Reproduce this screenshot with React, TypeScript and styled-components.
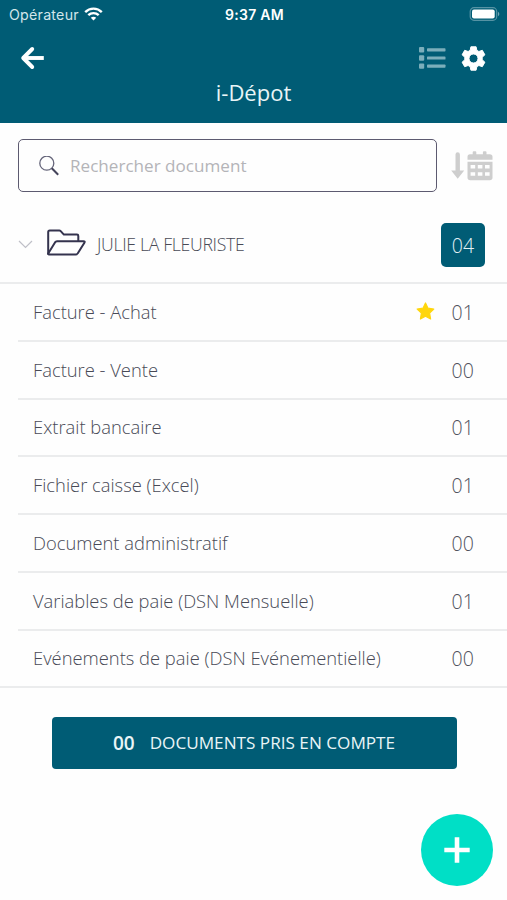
import React from 'react';
import styled, { createGlobalStyle } from 'styled-components';

const TEAL = '#005c75';

const GlobalStyle = createGlobalStyle`
  *, *::before, *::after { box-sizing: border-box; }
  body { margin: 0; background: #fff; font-family: "Open Sans", sans-serif; }
  button { font: inherit; border: 0; padding: 0; background: none; }
  svg { display: block; flex: none; }
`;

const Screen = styled.main`
  position: relative;
  width: 507px;
  height: 900px;
  display: flex;
  flex-direction: column;
  overflow: hidden;
  background: #fefefe;
`;

const Header = styled.header`
  height: 123px;
  flex: none;
  background: ${TEAL};
  color: #fff;
`;

const StatusBar = styled.div`
  height: 28px;
  display: grid;
  grid-template-columns: 1fr auto 1fr;
  align-items: center;
  padding: 0 7px 0 9px;
  font-family: Inter, sans-serif;
  font-size: 14.2px;
`;

const Carrier = styled.div`
  display: flex;
  align-items: center;
  gap: 5px;
  color: #d3e6ea;
  letter-spacing: 0.25px;
`;

const Clock = styled.div`
  font-weight: 600;
  font-size: 14px;
  letter-spacing: 0.3px;
`;

const BatterySlot = styled.div`
  justify-self: end;
  margin-top: -1px;
`;

const Toolbar = styled.nav`
  height: 60px;
  display: flex;
  align-items: center;
  padding: 0 21px 0 19px;
`;

const ToolbarActions = styled.div`
  display: flex;
  align-items: center;
  gap: 15px;
  margin-left: auto;
`;

const IconButton = styled.button`
  display: flex;
  color: inherit;
`;

const Title = styled.h1`
  margin: -11px 0 0;
  text-align: center;
  font-size: 22px;
  line-height: 30px;
  font-weight: 400;
  color: #e9f5f7;
`;

const SearchRow = styled.div`
  height: 85px;
  display: flex;
  align-items: center;
  gap: 14px;
  padding: 0 14px 0 18px;
`;

const SearchField = styled.label`
  width: 419px;
  height: 53px;
  display: flex;
  align-items: center;
  gap: 11px;
  padding-left: 20px;
  border: 1.5px solid #5d5a70;
  border-radius: 5px;
`;

const SearchInput = styled.input`
  flex: 1;
  min-width: 0;
  border: 0;
  outline: 0;
  padding: 0 0 1px;
  background: none;
  font: 400 17.1px "Open Sans", sans-serif;
  color: #6d6e78;
  &::placeholder { color: #b4b4b8; opacity: 1; }
`;

const FolderRow = styled.section`
  height: 76px;
  display: flex;
  align-items: center;
  padding: 0 22px 0 18px;
  border-bottom: 2px solid #ebeced;
`;

const FolderName = styled.h2`
  margin: -2px auto 0 11px;
  font-size: 17.7px;
  font-weight: 300;
  letter-spacing: -0.33px;
  color: #484a56;
`;

const Badge = styled.span`
  width: 44px;
  height: 44px;
  display: grid;
  place-items: center;
  border-radius: 5px;
  background: ${TEAL};
  color: #e4f2f5;
  font-size: 19.5px;
  font-weight: 300;
`;

const List = styled.ul`
  margin: 0;
  padding: 0;
  list-style: none;
  border-bottom: 2px solid #ebeced;
`;

const Item = styled.li`
  height: 57.75px;
  margin-left: 18px;
  padding: 0 29.5px 0 15px;
  display: flex;
  align-items: center;
  border-bottom: 2px solid #ebeced;
  &:last-child { border-bottom: 0; height: 55.5px; }
`;

const ItemLabel = styled.span`
  margin: -1px auto 0 0;
  font-size: 18.35px;
  font-weight: 300;
  color: #484a56;
`;

const Count = styled.span`
  width: 26px;
  margin: 1px 0 0 17px;
  font-size: 19.5px;
  font-weight: 300;
  color: #50525c;
`;

const SummaryButton = styled.button`
  width: 405px;
  height: 52px;
  margin: 29px 0 0 51.5px;
  flex: none;
  display: flex;
  align-items: center;
  justify-content: center;
  gap: 15px;
  padding-bottom: 1px;
  border-radius: 4px;
  background: ${TEAL};
  color: #e9f5f7;
  font-size: 17.15px;
`;

const SummaryCount = styled.span`
  font-size: 19px;
  font-weight: 600;
`;

const AddButton = styled.button`
  position: absolute;
  right: 14px;
  bottom: 14px;
  width: 72px;
  height: 72px;
  display: grid;
  place-items: center;
  border-radius: 50%;
  background: #00dfc6;
`;

const WifiIcon = () => (
  <svg width="19" height="14" viewBox="0 0 19 14" fill="none" stroke="#fff" strokeWidth="2.4">
    <path d="M1.2 5.1C5.8.5 13.2.5 17.8 5.1" />
    <path d="M4.3 8.2c2.9-2.8 7.5-2.8 10.4 0" />
    <path d="M9.5 13.5 6.8 10.8c1.5-1.4 3.900-1.400 5.400 0z" fill="#fff" stroke="none" />
  </svg>
);

const BatteryIcon = () => (
  <svg width="31" height="14" viewBox="0 0 31 14">
    <rect x="1.200" y=".7" width="26.500" height="12.600" rx="3.800" fill="none" stroke="#5693a4" strokeWidth="1.200" />
    <rect x="3" y="2.600" width="22.700" height="8.800" rx="2" fill="#fff" />
    <path d="M29 4.800c1.800.8 1.800 3.600 0 4.400z" fill="#73a5b3" />
  </svg>
);

const BackIcon = () => (
  <svg width="26" height="24" viewBox="0 0 26 24" fill="none" stroke="#fff" strokeWidth="3.900" strokeLinejoin="round" strokeLinecap="round">
    <path d="M13.200 3 4.200 12l9 9" />
    <path d="M5 12H24.800" strokeLinecap="butt" />
  </svg>
);

const ListIcon = () => (
  <svg width="27" height="22" viewBox="0 0 27 22" fill="#7baebb">
    <rect x="0" y="0" width="5.2" height="5.4" rx="1" />
    <rect x="0" y="8.3" width="5.2" height="5.4" rx="1" />
    <rect x="0" y="16.4" width="5.2" height="5.4" rx="1" />
    <rect x="8" y="1.2" width="18.5" height="3.2" rx=".7" />
    <rect x="8" y="9.4" width="18.5" height="3.2" rx=".7" />
    <rect x="8" y="17.5" width="18.5" height="3.2" rx=".7" />
  </svg>
);

const GearIcon = () => (
  <svg width="25" height="25" viewBox="0 0 25 25">
    <path
      fillRule="evenodd"
      fill="#fff"
      stroke="#fff"
      strokeWidth="1"
      strokeLinejoin="round"
      d="M9.900.8h5.200l.7 3.500 2.100 1.200 3.400-1.200 2.600 4.500-2.700 2.400v2.600l2.700 2.400-2.600 4.500-3.400-1.200-2.100 1.200-.7 3.500H9.900l-.7-3.500-2.100-1.200-3.400 1.200-2.600-4.500 2.700-2.400v-2.600L1.100 8.800l2.600-4.500 3.400 1.200 2.100-1.200zM12.500 8a4.500 4.500 0 1 0 0 9 4.500 4.500 0 1 0 0-9z"
    />
  </svg>
);

const SearchIcon = () => (
  <svg width="20" height="20" viewBox="0 0 20 20" fill="none">
    <circle cx="7.8" cy="7.200" r="7" stroke="#65657a" strokeWidth="1.3" />
    <path d="m12.800 12.200 6.400 6.500" stroke="#45445b" strokeWidth="2" />
  </svg>
);

const SortByDateIcon = () => (
  <svg width="42" height="30" viewBox="0 0 42 30" fill="#cecece">
    <path d="M4.500 3.500a2.200 2.200 0 0 1 4.400 0V19.500h4.300L6.700 27.800.2 19.500h4.300z" />
    <path fillRule="evenodd" d="M16.500 8.800V5.700q0-2.500 2.500-2.500h2.700V1.300q0-1 1-1h1.600q1 0 1 1v1.900h6.600V1.300q0-1 1-1h1.600q1 0 1 1v1.900h3.300q2.700 0 2.700 2.500v3.100zM16.500 10.700h25v15.800q0 2.700-2.700 2.700H19.200q-2.700 0-2.700-2.700zM19.600 14v3.400h4.600V14zM26.800 14v3.400h4.600V14zM34 14v3.400h4.600V14zM19.600 21.200v3.600h4.600v-3.600zM26.800 21.200v3.600h4.600v-3.600zM34 21.200v3.600h4.600v-3.600z" />
  </svg>
);

const ChevronGlyph = styled.svg`
  margin-top: -2px;
`;

const ChevronIcon = () => (
  <ChevronGlyph width="15" height="9" viewBox="0 0 15 9" fill="none" stroke="#bfc0c8" strokeWidth="1.2">
    <path d="m1 1 6.500 6.500L14 1" />
  </ChevronGlyph>
);

const FolderGlyph = styled.svg`
  margin: -6px 0 0 13px;
`;

const FolderIcon = () => (
  <FolderGlyph width="40" height="27" viewBox="0 0 40 27" fill="none" stroke="#34334e" strokeWidth="2" strokeLinejoin="round">
    <path d="M2.200 25V3q0-1.500 1.500-1.500h9.600q.8 0 1.400.6l3.200 3.500H31q1.300 0 1.300 1.400v5" />
    <path d="M2.200 24.500 9 13.400q.8-1.200 2-1.200h26.500q1.800 0 .9 1.500l-6.600 10.500q-.9 1.300-2.100 1.300H3q-1.300 0-.8-1z" />
  </FolderGlyph>
);

const StarGlyph = styled.svg`
  margin-top: -1px;
`;

const StarIcon = () => (
  <StarGlyph width="19" height="18" viewBox="0 0 19 18">
    <path d="m9.500 1 2.500 5.200 5.800.8-4.200 4.100 1 5.900-5.100-2.800L4.400 17l1-5.900L1.200 7 7 6.200z" fill="#ffd60c" stroke="#ffd60c" strokeWidth="1.200" strokeLinejoin="round" />
  </StarGlyph>
);

const PlusIcon = () => (
  <svg width="26" height="26" viewBox="0 0 26 26">
    <path d="M13 .3v25.400M.3 13h25.400" stroke="#fff" strokeWidth="4.600" />
  </svg>
);

interface Category {
  label: string;
  count: string;
  starred?: boolean;
}

const categories: Category[] = [
  { label: 'Facture - Achat', count: '01', starred: true },
  { label: 'Facture - Vente', count: '00' },
  { label: 'Extrait bancaire', count: '01' },
  { label: 'Fichier caisse (Excel)', count: '01' },
  { label: 'Document administratif', count: '00' },
  { label: 'Variables de paie (DSN Mensuelle)', count: '01' },
  { label: 'Evénements de paie (DSN Evénementielle)', count: '00' },
];

export default function App() {
  return (
    <Screen>
      <GlobalStyle />
      <Header>
        <StatusBar>
          <Carrier>Opérateur <WifiIcon /></Carrier>
          <Clock>9:37 AM</Clock>
          <BatterySlot><BatteryIcon /></BatterySlot>
        </StatusBar>
        <Toolbar>
          <IconButton aria-label="Retour"><BackIcon /></IconButton>
          <ToolbarActions>
            <IconButton aria-label="Liste"><ListIcon /></IconButton>
            <IconButton aria-label="Paramètres"><GearIcon /></IconButton>
          </ToolbarActions>
        </Toolbar>
        <Title>i-Dépot</Title>
      </Header>
      <SearchRow>
        <SearchField>
          <SearchIcon />
          <SearchInput placeholder="Rechercher document" />
        </SearchField>
        <IconButton aria-label="Trier par date"><SortByDateIcon /></IconButton>
      </SearchRow>
      <FolderRow>
        <ChevronIcon />
        <FolderIcon />
        <FolderName>JULIE LA FLEURISTE</FolderName>
        <Badge>04</Badge>
      </FolderRow>
      <List>
        {categories.map(({ label, count, starred }) => (
          <Item key={label}>
            <ItemLabel>{label}</ItemLabel>
            {starred && <StarIcon />}
            <Count>{count}</Count>
          </Item>
        ))}
      </List>
      <SummaryButton>
        <SummaryCount>00</SummaryCount>
        <span>DOCUMENTS PRIS EN COMPTE</span>
      </SummaryButton>
      <AddButton aria-label="Ajouter"><PlusIcon /></AddButton>
    </Screen>
  );
}
